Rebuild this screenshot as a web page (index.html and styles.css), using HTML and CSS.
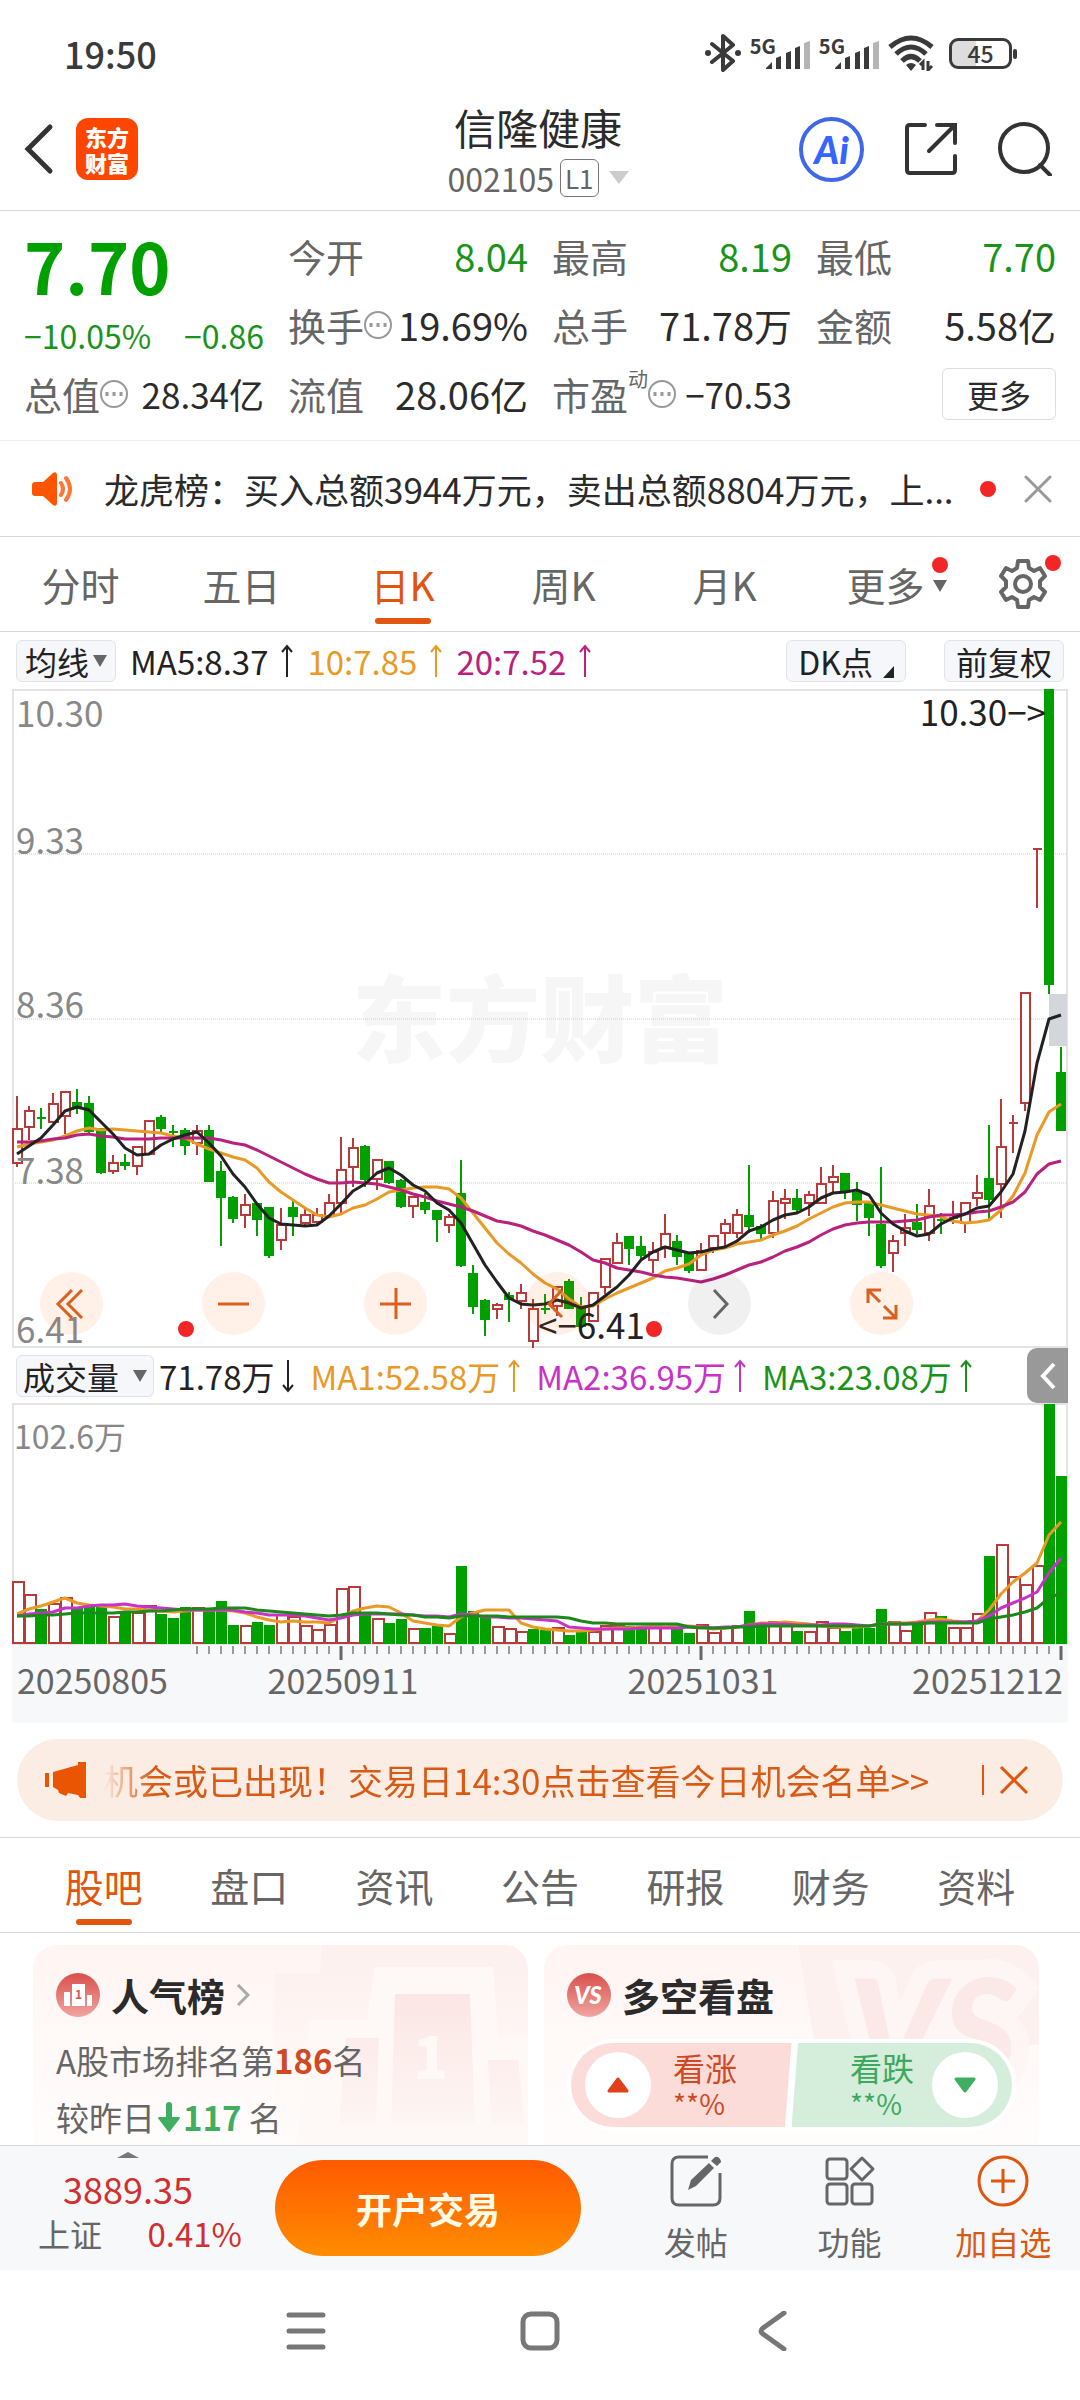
FILE: index.html
```html
<!DOCTYPE html>
<html lang="zh-CN">
<head>
    <meta charset="UTF-8">
    <meta name="viewport" content="width=device-width, initial-scale=1.0">
    <title>信隆健康 002105</title>
    <link rel="stylesheet" href="styles.css">
</head>
<body>
    <div class="status-bar">
        <span class="clock">19:50</span>
        <div class="status-icons">
            <svg width="36" height="38" viewBox="0 0 36 38"><path d="M7 10l21 17-10 9V2l10 9L7 28" fill="none" stroke="#3a3a3a" stroke-width="4" stroke-linejoin="round" stroke-linecap="round"/><circle cx="3" cy="19" r="3"/><circle cx="33" cy="19" r="3"/></svg>
            <div class="signal"><span>5G</span><svg width="44" height="28" viewBox="0 0 44 28"><path d="M0 27l6-6v7H0zM10 17l5-2v13h-5zM20 12l5-2v18h-5zM29 7l5-2v23h-5z"/><path d="M38 2l6-2v28h-6z" fill="#b5b5b5"/></svg></div>
            <div class="signal"><span>5G</span><svg width="44" height="28" viewBox="0 0 44 28"><path d="M0 27l6-6v7H0zM10 17l5-2v13h-5zM20 12l5-2v18h-5zM29 7l5-2v23h-5z"/><path d="M38 2l6-2v28h-6z" fill="#b5b5b5"/></svg></div>
            <svg width="46" height="36" viewBox="0 0 46 36"><path d="M2 12Q23-6 44 12M8 19Q23 5 38 19M14 26Q23 17 32 26" fill="none" stroke="#3a3a3a" stroke-width="5"/><path d="M18 30q5-4 10 0l-5 6z"/><path d="M35 35v-8l-3 3M40 26v9l4-4" fill="none" stroke="#3a3a3a" stroke-width="3"/></svg>
            <div class="battery">45</div>
        </div>
    </div>

    <header class="header">
        <div class="header-left">
            <button class="icon-button" aria-label="返回"><svg width="30" height="52" viewBox="0 0 30 52"><path d="M26 4L4 26l22 22" fill="none" stroke="#333" stroke-width="5" stroke-linecap="round"/></svg></button>
            <div class="logo">东方<br>财富</div>
        </div>
        <div class="header-title">
            <h1>信隆健康</h1>
            <div class="code">002105<span class="level">L1</span><svg width="20" height="14" viewBox="0 0 20 14"><path d="M0 0h20L10 13z" fill="#ccc"/></svg></div>
        </div>
        <div class="header-right">
            <button class="ai-button" aria-label="Ai">Ai</button>
            <button class="icon-button" aria-label="分享"><svg width="54" height="54" viewBox="0 0 54 54"><path d="M21 3H6q-3 0-3 3v42q0 3 3 3h42q3 0 3-3V34M33 3h18v18M51 3L25 29" fill="none" stroke="#333" stroke-width="4" stroke-linecap="round"/></svg></button>
            <button class="icon-button" aria-label="搜索"><svg width="54" height="54" viewBox="0 0 54 54"><circle cx="26" cy="26" r="24" fill="none" stroke="#333" stroke-width="4"/><path d="M42 43l10 10" stroke="#333" stroke-width="4" stroke-linecap="round"/></svg></button>
        </div>
    </header>

    <section class="quote">
        <div class="quote-main">
            <div class="price">7.70</div>
            <div class="change"><span>−10.05%</span><span>−0.86</span></div>
        </div>
        <div class="quote-item"><span>今开</span><b class="down">8.04</b></div>
        <div class="quote-item"><span>最高</span><b class="down">8.19</b></div>
        <div class="quote-item"><span>最低</span><b class="down">7.70</b></div>
        <div class="quote-item"><span>换手<i class="more-dots"></i></span><b>19.69%</b></div>
        <div class="quote-item"><span>总手</span><b>71.78万</b></div>
        <div class="quote-item"><span>金额</span><b>5.58亿</b></div>
        <div class="quote-item small"><span>总值<i class="more-dots"></i></span><b>28.34亿</b></div>
        <div class="quote-item"><span>流值</span><b>28.06亿</b></div>
        <div class="quote-item small"><span>市盈<sup>动</sup><i class="more-dots"></i></span><b>−70.53</b></div>
        <div class="quote-item"><button class="more-button">更多</button></div>
    </section>

    <section class="notice">
        <svg width="42" height="36" viewBox="0 0 42 36"><path d="M3 11h8L21 2q4-2 4 2v28q0 4-4 2l-10-9H3q-3 0-3-3v-8q0-3 3-3z" fill="#ff5500"/><path d="M29 12q4 6 0 12M34 7q8 11 0 22" fill="none" stroke="#ff7733" stroke-width="4" stroke-linecap="round"/></svg>
        <p>龙虎榜：买入总额3944万元，卖出总额8804万元，上...</p>
        <span class="dot"></span>
        <button class="icon-button" aria-label="关闭"><svg width="28" height="28" viewBox="0 0 28 28"><path d="M2 2l24 24M26 2L2 26" stroke="#999" stroke-width="3" stroke-linecap="round"/></svg></button>
    </section>

    <nav class="period-tabs">
        <a href="#">分时</a>
        <a href="#">五日</a>
        <a href="#" class="active">日K</a>
        <a href="#">周K</a>
        <a href="#">月K</a>
        <a href="#"><span class="with-mark">更多<svg class="tab-arrow" width="14" height="12" viewBox="0 0 14 12"><path d="M0 0h14L7 12z" fill="#666"/></svg><span class="dot tab-dot"></span></span></a>
        <button class="settings" aria-label="设置"><span class="with-mark"><svg width="48" height="50" viewBox="0 0 48 50"><path d="M19 2h10l1 7 5 3 6-3 5 8-5 5v6l5 5-5 8-6-3-5 3-1 7H19l-1-7-5-3-6 3-5-8 5-5v-6l-5-5 5-8 6 3 5-3z" fill="none" stroke="#666" stroke-width="4" stroke-linejoin="round"/><circle cx="24" cy="25" r="8" fill="none" stroke="#666" stroke-width="4"/></svg><span class="dot gear-dot"></span></span></button>
    </nav>

    <div class="indicators">
        <button class="chip">均线<svg width="14" height="12" viewBox="0 0 14 12"><path d="M0 0h14L7 12z" fill="#666"/></svg></button>
        <span class="ma black">MA5:8.37<svg class="arrow" viewBox="0 0 12 34"><path d="M6 33V2M1 8l5-6 5 6"/></svg></span>
        <span class="ma orange">10:7.85<svg class="arrow" viewBox="0 0 12 34"><path d="M6 33V2M1 8l5-6 5 6"/></svg></span>
        <span class="ma magenta">20:7.52<svg class="arrow" viewBox="0 0 12 34"><path d="M6 33V2M1 8l5-6 5 6"/></svg></span>
        <div class="chips">
            <button class="chip">DK点<svg class="corner" width="11" height="12" viewBox="0 0 11 12"><path d="M11 0v12H0z" fill="#222"/></svg></button>
            <button class="chip">前复权</button>
        </div>
    </div>

    <div class="chart">
        <svg id="kline" viewBox="0 0 1056 659">
            <text class="watermark" x="528" y="366" text-anchor="middle">东方财富</text>
            <path class="grid" d="M1 165h1054M1 330h1054M1 494h1054"/>
            <rect class="frame" x="1" y="1" width="1054" height="657"/>
            <rect class="gap" x="1037" y="305" width="18" height="52"/>
        </svg>
        <div class="chart-tools">
            <button aria-label="最左"><svg viewBox="0 0 63 63"><path d="M32 18L18 32l14 14M42 18L28 32l14 14"/></svg></button>
            <button aria-label="缩小"><svg viewBox="0 0 63 63"><path d="M16 32h31"/></svg></button>
            <button aria-label="放大"><svg viewBox="0 0 63 63"><path d="M16 32h31M32 16v31"/></svg></button>
            <button aria-label="左移"><svg viewBox="0 0 63 63"><path d="M36 18L23 32l13 13"/></svg></button>
            <button aria-label="右移" class="grey"><svg viewBox="0 0 63 63"><path d="M26 18l13 14-13 14"/></svg></button>
            <button aria-label="全屏"><svg viewBox="0 0 63 63"><path d="M18 31V18h13M18 18l12 12M46 33v13H33M46 46L34 34"/></svg></button>
        </div>
    </div>

    <div class="indicators volume-head">
        <button class="chip">成交量<svg width="14" height="12" viewBox="0 0 14 12"><path d="M0 0h14L7 12z" fill="#666"/></svg></button>
        <span class="ma black">71.78万<svg class="arrow" viewBox="0 0 12 34"><path d="M6 1v31M1 26l5 6 5-6"/></svg></span>
        <span class="ma orange">MA1:52.58万<svg class="arrow" viewBox="0 0 12 34"><path d="M6 33V2M1 8l5-6 5 6"/></svg></span>
        <span class="ma purple">MA2:36.95万<svg class="arrow" viewBox="0 0 12 34"><path d="M6 33V2M1 8l5-6 5 6"/></svg></span>
        <span class="ma green">MA3:23.08万<svg class="arrow" viewBox="0 0 12 34"><path d="M6 33V2M1 8l5-6 5 6"/></svg></span>
        <button class="collapse" aria-label="展开"><svg width="16" height="28" viewBox="0 0 16 28"><path d="M14 2L3 14l11 12" fill="none" stroke="#fff" stroke-width="4"/></svg></button>
    </div>

    <div class="chart">
        <svg id="volume" viewBox="0 0 1056 320">
            <rect class="axis" x="0" y="242" width="1056" height="78"/>
            <rect class="frame" x="1" y="1" width="1054" height="240"/>
        </svg>
    </div>

    <section class="banner">
        <svg width="42" height="36" viewBox="0 0 42 36"><path d="M0 11h4v14H0zM8 10l25-7V0h8v36h-6l-2-3-10-2-2 3-7-3-1-3-5-3z" fill="#ea5504"/></svg>
        <p>机会或已出现！交易日14:30点击查看今日机会名单&gt;&gt;</p>
        <button class="icon-button" aria-label="关闭"><svg width="30" height="30" viewBox="0 0 30 30"><path d="M2 2l26 26M28 2L2 28" stroke="#e0560f" stroke-width="3"/></svg></button>
    </section>

    <nav class="info-tabs">
        <a href="#" class="active">股吧</a>
        <a href="#">盘口</a>
        <a href="#">资讯</a>
        <a href="#">公告</a>
        <a href="#">研报</a>
        <a href="#">财务</a>
        <a href="#">资料</a>
    </nav>

    <main class="cards">
        <section class="card">
            <svg class="card-art" width="495" height="200" viewBox="0 0 495 200">
                <defs>
                    <linearGradient id="outer" x2="0" y2="1"><stop stop-color="#fdf0ee"/><stop offset="1" stop-color="#fffcfb"/></linearGradient>
                    <linearGradient id="block" x2="0" y2="1"><stop stop-color="#fbe6e4"/><stop offset="1" stop-color="#fdf6f4"/></linearGradient>
                </defs>
                <path d="M241 28h46l2-28h206v200H241z" fill="url(#outer)"/>
                <path d="M277 75h57l8-53h118l5 70h30v108H263z" fill="#fef9f7"/>
                <path d="M362 49h75l5 131h-84zM313 93h33l-3 87h-37zM455 115h30l7 65h-34z" fill="url(#block)"/>
                <text x="380" y="134">1</text>
            </svg>
            <h2><svg width="44" height="44" viewBox="0 0 44 44"><circle cx="22" cy="22" r="22" fill="url(#red)"/><path d="M16 11h13v22H16zM8 19h6v14H8zM31 22h5v11h-5z" fill="#fff"/><text x="19" y="26">1</text></svg>人气榜<svg width="14" height="22" viewBox="0 0 14 22"><path d="M2 1l10 10L2 21" fill="none" stroke="#aaa" stroke-width="3"/></svg></h2>
            <p>A股市场排名第<b class="red">186</b>名</p>
            <p>较昨日<svg width="22" height="30" viewBox="0 0 22 30"><path d="M11 3v17" stroke="#3fae62" stroke-width="6" stroke-linecap="round"/><path d="M1 16h20L11 29z" fill="#3fae62" stroke="#3fae62" stroke-width="2" stroke-linejoin="round"/></svg><b class="rise">117</b> 名</p>
        </section>
        <section class="card">
            <svg class="card-art" width="495" height="200" viewBox="0 0 495 200">
                <path d="M254 0h241v100H271z" fill="#fdf1ef"/>
                <text class="vs" x="304" y="140">VS</text>
            </svg>
            <h2><svg width="44" height="44" viewBox="0 0 44 44"><defs><linearGradient id="red" x2="0" y2="1"><stop stop-color="#d9504c"/><stop offset="1" stop-color="#f0a5a1"/></linearGradient></defs><circle cx="22" cy="22" r="22" fill="url(#red)"/><text class="vs-small" x="7" y="31">VS</text></svg>多空看盘</h2>
            <div class="vote">
                <button class="vote-up"><span class="knob"><svg width="22" height="16" viewBox="0 0 22 16"><path d="M11 2l9 12H2z" fill="#e0401a" stroke="#e0401a" stroke-width="3" stroke-linejoin="round"/></svg></span><span>看涨<small>**%</small></span></button>
                <button class="vote-down"><span>看跌<small>**%</small></span><span class="knob"><svg width="22" height="16" viewBox="0 0 22 16"><path d="M11 14l9-12H2z" fill="#3fae62" stroke="#3fae62" stroke-width="3" stroke-linejoin="round"/></svg></span></button>
            </div>
        </section>
    </main>

    <footer class="bottom-bar">
        <div class="index">
            <svg width="22" height="6" viewBox="0 0 22 6"><path d="M0 6L11 0l11 6z" fill="#777"/></svg>
            <strong>3889.35</strong>
            <div><span>上证</span><em>0.41%</em></div>
        </div>
        <button class="trade">开户交易</button>
        <div class="actions">
            <button><svg width="52" height="52" viewBox="0 0 52 52"><path d="M38 2H9q-7 0-7 7v34q0 7 7 7h34q7 0 7-7V18" fill="none" stroke="#666" stroke-width="3"/><path d="M18 35l3-10L39 8l5 5-18 18zM41 6l4-4q3-1 5 2t0 4l-3 3z" fill="#666"/></svg>发帖</button>
            <button><svg width="52" height="52" viewBox="0 0 52 52"><g fill="none" stroke="#666" stroke-width="3"><rect x="3" y="4" width="20" height="20" rx="3"/><rect x="3" y="29" width="20" height="20" rx="3"/><rect x="28" y="29" width="20" height="20" rx="3"/><path d="M38 3l11 11-11 11-11-11z" stroke-linejoin="round"/></g></svg>功能</button>
            <button class="add"><svg width="52" height="52" viewBox="0 0 52 52"><circle cx="26" cy="26" r="24" fill="none" stroke="#e0560f" stroke-width="3"/><path d="M14 26h24M26 14v24" stroke="#e0560f" stroke-width="3"/></svg>加自选</button>
        </div>
    </footer>

    <div class="system-nav">
        <button class="icon-button" aria-label="菜单"><svg width="40" height="40" viewBox="0 0 40 40"><path d="M3 4h34M3 20h34M3 36h34"/></svg></button>
        <button class="icon-button" aria-label="主页"><svg width="40" height="40" viewBox="0 0 40 40"><rect x="3" y="3" width="34" height="34" rx="8"/></svg></button>
        <button class="icon-button" aria-label="后退"><svg width="40" height="40" viewBox="0 0 40 40"><path d="M30 2L9 17q-4 3 0 6l21 15"/></svg></button>
    </div>

    <script src="chart.js"></script>
</body>
</html>
```
FILE: styles.css
```css
* {
    box-sizing: border-box;
}
body {
    margin: 0;
    min-height: 100vh;
    display: flex;
    flex-direction: column;
    font-family: "Noto Sans CJK SC", "Noto Sans", sans-serif;
    font-size: 32px;
    line-height: 40px;
    color: #2b2b2b;
    background: #fff;
}
h1, h2, p {
    margin: 0;
    font-weight: 400;
}
button {
    font: inherit;
    color: inherit;
    border: none;
    background: none;
    padding: 0;
    cursor: pointer;
}
a {
    color: inherit;
    text-decoration: none;
}
svg {
    display: block;
    flex: none;
}
.icon-button {
    display: flex;
}
.dot {
    width: 16px;
    height: 16px;
    border-radius: 50%;
    background: #f22626;
    flex: none;
}

/* status bar */
.status-bar {
    display: flex;
    justify-content: space-between;
    align-items: center;
    height: 88px;
    padding: 18px 68px 0 64px;
    color: #3a3a3a;
}
.clock {
    font-size: 36px;
    font-weight: 500;
}
.status-icons {
    display: flex;
    align-items: center;
    gap: 9px;
}
.status-icons svg {
    fill: #3a3a3a;
}
.signal {
    display: flex;
    align-items: flex-end;
    height: 32px;
}
.signal span {
    align-self: flex-start;
    margin-right: -10px;
    font-size: 20px;
    font-weight: 700;
    line-height: 18px;
}
.battery {
    position: relative;
    width: 63px;
    height: 31px;
    margin-left: 6px;
    border: 3px solid #3a3a3a;
    border-radius: 9px;
    background: linear-gradient(90deg, #ddd 24px, #fff 24px);
    font-size: 23px;
    font-weight: 500;
    line-height: 25px;
    text-align: center;
}
.battery::after {
    content: "";
    position: absolute;
    right: -8px;
    top: 8px;
    width: 4px;
    height: 10px;
    border-radius: 2px;
    background: #3a3a3a;
}

/* title bar */
.header {
    display: grid;
    grid-template-columns: 1fr auto 1fr;
    align-items: center;
    height: 123px;
    padding: 0 28px 0 24px;
    border-bottom: 1px solid #d8d8d8;
}
.header-left {
    display: flex;
    align-items: center;
    gap: 22px;
}
.logo {
    width: 62px;
    height: 62px;
    padding-top: 5px;
    border-radius: 12px;
    background: #ff4600;
    color: #fff;
    font-size: 22px;
    font-weight: 900;
    line-height: 26px;
    text-align: center;
}
.header-title {
    padding-top: 4px;
    text-align: center;
}
.header-title h1 {
    font-size: 42px;
    line-height: 54px;
}
.code {
    display: flex;
    align-items: center;
    justify-content: center;
    height: 48px;
    color: #666;
}
.level {
    margin: 0 10px 0 6px;
    padding: 0 4px;
    border: 1px solid #777;
    border-radius: 6px;
    font-size: 26px;
    line-height: 36px;
}
.header-right {
    display: flex;
    align-items: center;
    justify-content: flex-end;
    gap: 40px;
}
.ai-button {
    width: 65px;
    height: 65px;
    border: 4px solid #3f68e8;
    border-radius: 50%;
    color: #3465ff;
    font-family: Lato, sans-serif;
    font-size: 38px;
    font-weight: 900;
    font-style: italic;
}

/* quote numbers */
.quote {
    display: grid;
    grid-template-columns: repeat(4, minmax(0, 1fr));
    grid-template-rows: 69px 69px 70px;
    column-gap: 24px;
    padding: 10px 24px 11px;
    border-bottom: 1px solid #eee;
}
.quote-main {
    grid-row: span 2;
    color: #1a931a;
}
.price {
    color: #00a000;
    font-size: 70px;
    font-weight: 700;
    line-height: 88px;
}
.change {
    display: flex;
    justify-content: space-between;
    padding-top: 6px;
    font-size: 32px;
}
.quote-item {
    display: flex;
    align-items: center;
    justify-content: space-between;
    white-space: nowrap;
    font-size: 38px;
}
.quote-item > span {
    display: flex;
    align-items: center;
    color: #666;
}
.quote-item b {
    font-weight: 400;
}
.quote-item.small b {
    font-size: 35px;
}
.quote-item b.down {
    color: #1a931a;
}
.quote-item sup {
    align-self: flex-start;
    font-size: 20px;
    line-height: 10px;
}
.more-dots {
    width: 28px;
    height: 28px;
    border: 2px solid #999;
    border-radius: 50%;
    background: radial-gradient(circle, #999 2px, transparent 2px) center / 7px 24px repeat-x content-box;
    padding: 0 2px;
}
.more-button {
    width: 114px;
    height: 52px;
    margin-left: auto;
    border: 1px solid #ddd;
    border-radius: 6px;
    font-size: 32px;
}

/* notice line */
.notice {
    display: flex;
    align-items: center;
    height: 96px;
    padding: 0 28px 0 32px;
    border-bottom: 1px solid #d8d8d8;
    font-size: 35px;
}
.notice p {
    flex: 1;
    min-width: 0;
    margin: 0 10px 0 30px;
    overflow: hidden;
    white-space: nowrap;
    line-height: 52px;
}
.notice .icon-button {
    margin-left: 28px;
}

/* tabs */
.period-tabs, .info-tabs {
    display: flex;
    height: 95px;
    border-bottom: 1px solid #d8d8d8;
    color: #666;
    font-size: 39px;
}
.period-tabs a, .info-tabs a {
    position: relative;
    flex: 1;
    line-height: 94px;
    text-align: center;
}
.period-tabs a.active, .info-tabs a.active {
    color: #e0560f;
}
.active::after {
    content: "";
    position: absolute;
    left: calc(50% - 28px);
    bottom: 7px;
    width: 56px;
    height: 6px;
    border-radius: 3px;
    background: #e0560f;
}
.settings {
    display: flex;
    align-items: center;
    justify-content: center;
    width: 114px;
}
.with-mark {
    position: relative;
}
.tab-arrow {
    position: absolute;
    right: -22px;
    top: 24px;
}
.tab-dot {
    position: absolute;
    right: -23px;
    top: 1px;
}
.gear-dot {
    position: absolute;
    right: -14px;
    top: -4px;
}

/* indicator rows */
.indicators {
    display: flex;
    align-items: center;
    height: 57px;
    padding: 0 16px;
    font-size: 33px;
    white-space: nowrap;
}
.chip {
    display: flex;
    align-items: center;
    height: 42px;
    padding: 0 8px;
    border: 1px solid #e2e3e6;
    border-radius: 6px;
    background: #f6f7fa;
    color: #222;
    font-size: 32px;
}
.chip svg {
    margin-left: 4px;
}
.chip .corner {
    margin: 22px 0 0 10px;
}
.ma {
    display: flex;
    align-items: center;
    margin-left: 14px;
}
.arrow {
    width: 12px;
    height: 34px;
    margin-left: 13px;
    fill: none;
    stroke: currentColor;
    stroke-width: 2;
}
.black {
    color: #222;
}
.orange {
    color: #e99a26;
}
.magenta {
    color: #b8217c;
}
.purple {
    color: #c832c8;
}
.green {
    color: #1a931a;
}
.chips {
    display: flex;
    gap: 38px;
    margin-left: auto;
}
.chips .chip {
    padding: 0 11px;
}
.volume-head {
    height: 55px;
    padding-right: 12px;
}
.volume-head .chip {
    padding: 0 6px;
}
.volume-head .chip svg {
    margin-left: 14px;
}
.volume-head .ma {
    margin-left: 16px;
}
.volume-head .black {
    margin-left: 5px;
}
.volume-head .arrow {
    margin-left: 8px;
}
.collapse {
    display: flex;
    align-items: center;
    justify-content: center;
    width: 41px;
    height: 55px;
    margin-left: auto;
    border-radius: 10px 0 0 10px;
    background: #999;
}

/* charts */
.chart {
    position: relative;
    margin: 0 12px;
}
.chart > svg {
    width: 100%;
    overflow: visible;
}
.chart text {
    font-size: 35px;
    fill: #888;
}
.chart text.mark {
    fill: #222;
}
.chart text.volume-max {
    font-size: 32px;
}
.chart text.date {
    font-size: 34px;
    fill: #666;
}
.chart text.watermark {
    font-size: 94px;
    font-weight: 900;
    fill: #f6f6f6;
}
.frame {
    fill: none;
    stroke: #e4e4e4;
    stroke-width: 2;
}
.grid {
    stroke: #ccc;
    stroke-dasharray: 1 1;
}
.axis {
    fill: #f7f8fa;
}
.gap {
    fill: #d3d7dc;
}
.up {
    fill: #fff;
    stroke: #b93a3a;
    stroke-width: 2;
}
.fall {
    fill: #00a000;
    stroke: #00a000;
    stroke-width: 2;
}
.line {
    fill: none;
    stroke-width: 3;
    stroke-linejoin: round;
}
.line.ma-a {
    stroke: #222;
}
.line.ma-b {
    stroke: #e99a26;
}
.line.ma-c {
    stroke: #b8217c;
}
.line.ma-d {
    stroke: #c832c8;
}
.line.ma-e {
    stroke: #1a8a1a;
}
.tick {
    stroke: #999;
    stroke-width: 2;
}
.tick.major {
    stroke: #666;
    stroke-width: 3;
}
.badge {
    fill: #f22626;
}
.chart-tools {
    position: absolute;
    left: 28px;
    bottom: 13px;
    display: flex;
    gap: 99px;
}
.chart-tools button {
    width: 63px;
    height: 63px;
    border-radius: 50%;
    background: rgba(255, 90, 0, 0.09);
}
.chart-tools svg {
    fill: none;
    stroke: #d9601f;
    stroke-width: 3;
}
.chart-tools .grey {
    background: rgba(0, 0, 0, 0.06);
}
.chart-tools .grey svg {
    stroke: #666;
}

/* banner */
.banner {
    display: flex;
    align-items: center;
    height: 82px;
    margin: 16px 17px;
    padding: 0 34px 0 28px;
    border-radius: 41px;
    background: #fcede4;
    color: #d95a14;
    font-size: 35px;
}
.banner p {
    flex: 1;
    min-width: 0;
    margin-left: 16px;
    overflow: hidden;
    white-space: nowrap;
    line-height: 52px;
    -webkit-mask-image: linear-gradient(90deg, transparent, #000 50px);
    mask-image: linear-gradient(90deg, transparent, #000 50px);
}
.banner .icon-button {
    padding-left: 15px;
    border-left: 2px solid #e0560f;
}
.info-tabs {
    height: 96px;
    padding: 0 31px;
    border-top: 1px solid #d8d8d8;
}

/* cards */
.cards {
    flex: 1;
    display: grid;
    grid-template-columns: 1fr 1fr;
    gap: 16px;
    padding: 12px 41px 0 33px;
}
.card {
    position: relative;
    padding: 24px 23px 0;
    border-radius: 24px 24px 0 0;
    background: linear-gradient(#fff5f3, #fffdfc);
    overflow: hidden;
    color: #666;
}
.card > * {
    position: relative;
}
.card .card-art {
    position: absolute;
    right: 0;
    top: 0;
}
.card-art text {
    fill: #fef8f6;
    font-size: 58px;
    font-weight: 900;
}
.card-art .vs {
    font-family: Lato, sans-serif;
    font-size: 146px;
    font-style: italic;
    fill: #fbe9e7;
    stroke: #fef6f4;
    stroke-width: 36px;
    paint-order: stroke;
}
.card h2 {
    display: flex;
    align-items: center;
    gap: 11px;
    height: 52px;
    margin-bottom: 10px;
    color: #2b2b2b;
    font-size: 38px;
    font-weight: 700;
}
.card h2 text {
    font-size: 12px;
    font-weight: 700;
    fill: #d9504c;
}
.card h2 .vs-small {
    font-family: Lato, sans-serif;
    font-size: 24px;
    font-weight: 900;
    font-style: italic;
    fill: #fff;
}
.card p {
    display: flex;
    align-items: center;
    height: 57px;
    font-size: 33px;
    white-space: pre;
}
.card p svg {
    margin: 0 3px;
}
.red {
    color: #cf4a24;
}
.rise {
    color: #3fae62;
}
.vote {
    display: flex;
    gap: 6px;
    margin-top: 18px;
    padding: 4px;
    border-radius: 46px;
    background: #fff;
}
.vote button {
    flex: 1;
    display: flex;
    align-items: center;
    gap: 22px;
    height: 84px;
    padding: 0 14px;
    line-height: 36px;
    text-align: left;
}
.vote small {
    display: block;
    font-size: 28px;
}
.vote .vote-up {
    border-radius: 42px 0 0 42px;
    background: #fcdcd9;
    color: #cf4a24;
    clip-path: polygon(0 0, 100% 0, 97% 100%, 0 100%);
}
.vote .vote-down {
    justify-content: flex-end;
    gap: 18px;
    margin-left: -6px;
    border-radius: 0 42px 42px 0;
    background: #d5eedc;
    color: #3fa860;
    clip-path: polygon(3% 0, 100% 0, 100% 100%, 0 100%);
}
.knob {
    display: flex;
    align-items: center;
    justify-content: center;
    width: 66px;
    height: 66px;
    border-radius: 50%;
    background: #fff;
}

/* bottom bar */
.bottom-bar {
    display: flex;
    align-items: center;
    height: 125px;
    border-top: 1px solid #d8d8d8;
    background: #f7f8fa;
    color: #666;
}
.index {
    display: flex;
    flex-direction: column;
    align-items: center;
    width: 275px;
    padding: 0 33px 6px 38px;
}
.index svg {
    margin: 0 24px 10px 0;
}
.index strong {
    margin-right: 24px;
    color: #d03030;
    font-size: 36px;
    font-weight: 400;
}
.index div {
    display: flex;
    justify-content: space-between;
    width: 100%;
    line-height: 50px;
}
.index em {
    color: #d03030;
    font-size: 33px;
    font-style: normal;
}
.trade {
    width: 306px;
    height: 96px;
    border-radius: 48px;
    background: linear-gradient(#ff5a00, #ff8c00);
    color: #fffbe6;
    font-size: 36px;
    font-weight: 700;
}
.actions {
    flex: 1;
    display: flex;
    padding: 0 0 0 38px;
}
.actions button {
    flex: 1;
    display: flex;
    flex-direction: column;
    align-items: center;
    gap: 14px;
}
.actions .add {
    color: #d95a14;
}

/* system navigation */
.system-nav {
    display: flex;
    justify-content: center;
    align-items: center;
    gap: 194px;
    height: 130px;
    padding: 0 0 8px;
}
.system-nav svg {
    fill: none;
    stroke: #777;
    stroke-width: 5;
    stroke-linecap: round;
}
```
FILE: chart.js
```javascript
// one candle per day: colour, high, body top, body bottom, low
const candles = `r 165 265 365 377,r 196 209 258 298,g 200 230 232 265,r 155 188 243 245,r 152 153 226 280,g 145 186 200 220,g 165 190 270 275,g 262 265 392 398,r 343 367 391 398,g 340 367 371 387,
r 315 317 376 402,r 238 240 338 340,g 222 232 261 275,g 252 272 275 318,g 262 270 312 342,r 252 270 306 342,g 252 270 419 420,g 360 394 468 616,g 465 470 530 545,r 460 493 522 560,
g 488 490 534 585,g 498 500 641 652,r 500 553 598 627,g 478 500 524 585,r 500 523 546 552,r 500 522 542 548,r 460 487 525 532,r 288 387 486 515,r 292 321 378 438,g 312 317 413 438,
r 354 356 415 448,g 362 363 423 428,g 415 419 494 500,r 466 468 495 530,g 455 485 503 518,g 510 511 534 602,r 520 528 551 575,g 358 459 671 678,g 672 698 794 818,g 774 780 833 885,
r 785 793 804 834,g 752 765 773 843,r 728 757 781 803,r 775 803 900 920,g 758 804 808 818,r 735 737 795 825,g 713 723 800 803,g 768 803 854 870,r 754 757 840 842,r 652 655 738 760,
r 575 605 667 670,g 585 587 620 672,g 586 617 641 655,r 602 634 657 697,r 520 579 617 652,g 582 602 645 672,g 634 636 686 697,r 607 629 688 690,r 582 585 620 635,r 535 549 577 615,
r 505 523 577 590,g 373 526 554 575,g 548 558 575 600,r 450 480 577 590,r 445 473 486 535,g 445 475 503 515,r 450 463 485 525,r 378 428 486 488,r 373 407 424 455,g 397 399 450 473,
g 423 455 488 540,g 485 488 529 585,g 378 551 671 682,r 583 600 636 692,r 520 560 576 615,g 489 546 565 580,r 445 494 577 600,g 515 538 541 580,r 480 530 535 550,r 485 487 545 575,
r 403 457 470 495,g 252 414 474 535,r 175 317 430 530,r 222 245 246 336,r -145 -145 187 210,r -579 -576 -575 -400,g -1053 -1053 -172 -140,g 18 95 266 266`.split(',');

const priceLines = {
    'ma-b': [319,310,303,297,285,270,261,266,265,266,270,274,276,284,292,308,325,335,348,358,382,422,453,477,500,521,529,520,500,492,475,453,446,440,437,438,443,472,517,562,605,640,667,698,727,745,775,797,794,775,755,740,727,710,690,680,668,643,628,620,608,602,597,582,570,555,535,515,498,487,484,482,492,502,511,518,521,528,540,546,543,537,507,465,395,282,213,190],
    'ma-c': [303,302,300,295,290,282,279,285,288,294,295,294,291,290,290,290,291,297,305,313,326,346,363,380,398,414,426,426,424,425,430,437,447,458,468,481,488,498,510,526,539,547,556,570,583,596,611,634,656,667,680,688,694,702,709,712,718,722,715,702,686,673,663,647,630,618,602,582,563,553,547,542,543,543,541,538,529,523,521,519,514,509,498,484,453,400,368,360],
    'ma-a': [340,315,292,253,211,198,208,242,279,320,343,338,313,293,281,272,305,345,400,438,490,532,550,551,556,553,524,490,450,430,395,381,403,432,450,485,508,545,610,672,722,770,790,793,789,776,785,800,793,765,738,702,658,634,618,626,637,634,625,618,600,571,557,537,523,517,498,470,456,452,448,462,515,550,571,586,578,548,532,520,500,495,452,398,270,65,-66,-77]
};

const volumes = `r722 r762 g808 r790 r770 g800 g800 g800 r827 g818 r815 r795 g822 g834 g800 r800 g808 g783 g855 r855
g847 g855 r822 r828 r855 r868 r852 r745 r738 g820 r835 g850 g838 r864 g865 g858 r878 g678 g813 g835
r857 r864 r872 g868 g870 r862 g885 g875 r872 r855 r855 g858 g860 r860 r850 g866 g879 r851 r875 r857
r855 g813 g850 r844 r850 g873 r872 r844 r860 g873 g864 g864 g808 r844 r869 g852 r817 g829 r862 r862
r820 g649 r612 r707 r733 r675 g192 g408`.split(/\s+/);

const volumeLines = {
    'ma-b': [821,806,798,787,773,788,795,797,801,807,808,810,814,815,813,811,810,810,812,820,832,841,847,844,846,847,849,830,812,803,798,800,820,843,850,855,859,830,818,811,811,810,850,862,866,869,872,873,870,867,865,864,862,859,860,858,858,862,866,865,860,854,850,848,846,850,853,857,860,862,860,857,851,850,850,846,840,838,842,846,842,810,762,727,700,670,585,545],
    'ma-d': [828,822,820,815,805,803,799,796,795,791,797,801,804,807,810,811,810,810,810,815,820,826,826,826,829,835,841,835,826,822,822,822,823,825,828,827,830,823,826,830,832,833,835,838,840,842,860,865,868,868,867,866,865,863,863,863,861,862,863,862,861,856,853,853,853,855,856,855,853,853,855,857,853,852,851,850,846,845,845,846,843,828,803,788,775,757,700,655],
    'ma-e': [829,827,826,825,822,820,820,820,819,817,815,813,812,810,808,807,806,805,804,804,809,814,815,818,821,824,827,824,819,819,820,822,824,826,830,832,835,828,828,828,829,830,830,831,832,832,835,842,848,850,851,852,853,852,852,852,861,863,864,863,862,860,858,857,857,857,857,857,857,858,858,858,853,852,853,852,849,848,849,850,848,838,830,825,817,805,775,760]
};

const x = i => 5 + i * 12;
const priceY = v => Math.round(352 + v / 3);
const volumeY = v => Math.round((v - 189) / 3);

function drawLines(lines, y) {
    return Object.entries(lines).map(([name, values]) =>
        `<polyline class="line ${name}" points="${values.map((v, i) => x(i) + ',' + y(v)).join(' ')}"/>`
    ).join('');
}

function drawKline() {
    let html = '';
    candles.forEach((row, i) => {
        const [color, ...values] = row.trim().split(' ');
        const [high, top, bottom, low] = values.map(v => priceY(Number(v)));
        const cls = color === 'r' ? 'up' : 'fall';
        html += `<path class="${cls}" d="M${x(i)} ${high}V${low}"/>`;
        if (bottom - top < 2) {
            html += `<path class="${cls}" d="M${x(i) - 4} ${top}h9"/>`;
        } else {
            html += `<rect class="${cls}" x="${x(i) - 4}" y="${top}" width="${color === 'r' ? 9 : 8}" height="${bottom - top}"/>`;
        }
    });
    html += drawLines(priceLines, priceY);
    [['10.30', 38], ['9.33', 165], ['8.36', 329], ['7.38', 495], ['6.41', 654]].forEach(([label, y]) => {
        html += `<text x="4" y="${y}">${label}</text>`;
    });
    html += '<text class="mark" x="1034" y="37" text-anchor="end">10.30−&gt;</text>';
    html += '<text class="mark" x="526" y="650">&lt;−6.41</text>';
    html += '<circle class="badge" cx="174" cy="640" r="8"/><circle class="badge" cx="642" cy="640" r="8"/>';
    document.getElementById('kline').insertAdjacentHTML('beforeend', html);
}

function drawVolume() {
    let html = '';
    volumes.forEach((item, i) => {
        const top = volumeY(Number(item.slice(1)));
        const cls = item[0] === 'r' ? 'up' : 'fall';
        html += `<rect class="${cls}" x="${x(i) - 4}" y="${top + 1}" width="${cls === 'up' ? 11 : 9}" height="${239 - top}"/>`;
        if (i > 14) {
            const major = i === 27 || i === 57 || i === 87;
            html += `<path class="tick${major ? ' major' : ''}" d="M${x(i)} 243v${major ? 14 : 8}"/>`;
        }
    });
    html += drawLines(volumeLines, volumeY);
    html += '<text class="volume-max" x="2" y="46">102.6万</text>';
    html += '<text class="date" x="5" y="291">20250805</text>';
    html += '<text class="date" x="331" y="291" text-anchor="middle">20250911</text>';
    html += '<text class="date" x="691" y="291" text-anchor="middle">20251031</text>';
    html += '<text class="date" x="1051" y="291" text-anchor="end">20251212</text>';
    document.getElementById('volume').insertAdjacentHTML('beforeend', html);
}

drawKline();
drawVolume();
```
